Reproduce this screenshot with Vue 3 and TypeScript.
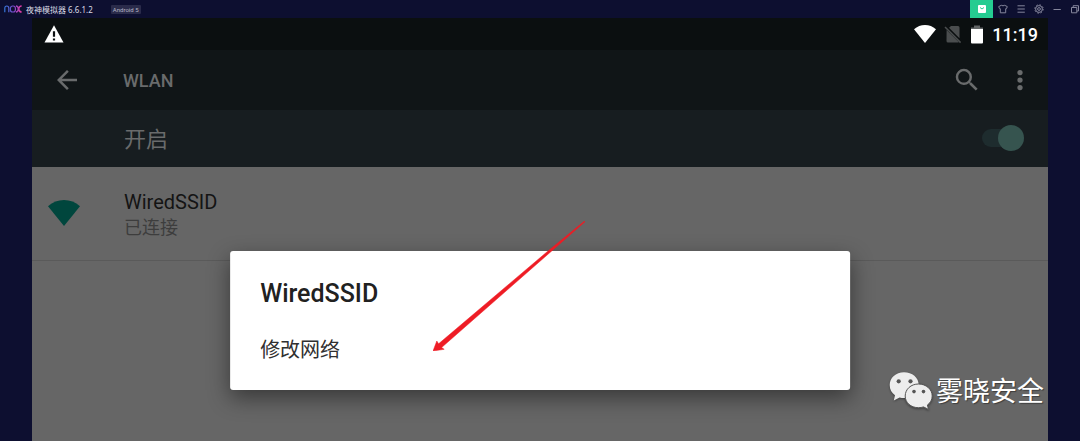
<script setup lang="ts">
import { ref } from 'vue'

const wifiOn = ref(true)
const networks = [{ ssid: 'WiredSSID', state: '已连接' }]
</script>

<template>
  <div class="emulator">
    <header class="titlebar">
      <svg class="nox" viewBox="0 0 18 8" role="img" aria-label="nox">
        <defs>
          <linearGradient id="nox-fill" x1="0" y1="0" x2="18" y2="0" gradientUnits="userSpaceOnUse">
            <stop offset="0" stop-color="#2f78d8" />
            <stop offset="0.55" stop-color="#7a48c8" />
            <stop offset="1" stop-color="#ee3aa0" />
          </linearGradient>
        </defs>
        <g fill="none" stroke="url(#nox-fill)" stroke-width="1.2">
          <path d="M.8 7.2V3.2Q.8 1 2.8 1T4.8 3.2V7.2" />
          <rect x="6.4" y="1" width="5" height="6" rx="2.3" />
          <path d="M12 1Q14 1 14.4 4Q14 7 12 7M17.6 1Q15.2 1 14.6 4Q15.2 7 17.6 7" stroke-width="1.5" />
        </g>
      </svg>
      <span class="app-name">夜神模拟器 6.6.1.2</span>
      <span class="badge">Android 5</span>
      <nav class="window-tools">
        <button class="tool store" aria-label="应用中心">
          <svg viewBox="0 0 10 10">
            <rect x="1" y="1" width="8" height="8" rx="1" fill="#fff" />
            <path d="M3 3.5Q5 6.5 7 3.5" fill="none" stroke="#25cc91" />
          </svg>
        </button>
        <button class="tool" aria-label="主题">
          <svg viewBox="0 0 10 10"><path d="M3.3 1.3Q5 2.3 6.7 1.3L9.3 2.6L8.5 4.7H7.7V8.8H2.3V4.7H1.5L.7 2.6Z" /></svg>
        </button>
        <button class="tool" aria-label="菜单">
          <svg viewBox="0 0 10 10"><path d="M1.5 1.8H8.8M1.5 5H8.8M1.5 8.2H8.8" /></svg>
        </button>
        <button class="tool" aria-label="设置">
          <svg viewBox="0 0 10 10">
            <circle cx="5" cy="5" r="3.4" />
            <circle cx="5" cy="5" r="1.4" />
            <circle cx="5" cy="5" r="4.2" stroke-dasharray="1.6 1.7" />
          </svg>
        </button>
        <button class="tool" aria-label="最小化">
          <svg viewBox="0 0 10 10"><path d="M1.5 5.5H8.8" /></svg>
        </button>
        <button class="tool" aria-label="最大化">
          <svg viewBox="0 0 10 10"><path d="M1.5 3.5H6.8V8.8H1.5ZM3.2 3.5V1.7H8.5V7H6.8" /></svg>
        </button>
      </nav>
    </header>

    <main class="screen">
      <div class="statusbar">
        <svg class="warning" viewBox="0 0 20 18" aria-hidden="true">
          <path d="M10 .3L19.5 17.5H.5Z" fill="#fff" />
          <path d="M10 6.2V11.8M10 13.4V15.4" stroke="#0b0f10" stroke-width="2.2" />
        </svg>
        <div class="indicators">
          <svg class="status-wifi" viewBox="0 0 32 26" aria-hidden="true">
            <path d="M16 26L0 6.2Q7 0 16 0T32 6.2Z" fill="#fff" />
          </svg>
          <svg class="sim" viewBox="0 0 18 19" aria-hidden="true">
            <path d="M7 1H14Q15.500 1 15.500 2.500V13.200L5 2.800ZM2.600 5L14.800 17Q14.500 17.500 13.500 17.500H4Q2.500 17.500 2.500 16Z" fill="#4a4d4e" />
            <path d="M1 2L16.600 17.600" stroke="#4a4d4e" stroke-width="1.500" />
          </svg>
          <svg class="battery" viewBox="0 0 14 19" aria-hidden="true">
            <path d="M1 4V2.500H4V.500H10V2.500H13V4Z" fill="#626566" />
            <path d="M1 4H13V17.500Q13 18.500 12 18.500H2Q1 18.500 1 17.500Z" fill="#fff" />
          </svg>
          <time class="clock">11:19</time>
        </div>
      </div>

      <div class="toolbar">
        <button class="icon-button" aria-label="返回">
          <svg viewBox="0 0 24 24"><path d="M20 11H7.83l5.59-5.59L12 4l-8 8 8 8 1.41-1.41L7.83 13H20v-2z" /></svg>
        </button>
        <h1>WLAN</h1>
        <div class="actions">
          <button class="icon-button" aria-label="搜索">
            <svg viewBox="0 0 24 24"><path d="M15.5 14h-.79l-.28-.27A6.47 6.47 0 0 0 16 9.5 6.5 6.5 0 1 0 9.5 16c1.61 0 3.09-.59 4.23-1.57l.27.28v.79l5 4.99L20.49 19l-4.99-5zm-6 0C7.01 14 5 11.99 5 9.5S7.01 5 9.5 5 14 7.01 14 9.5 11.99 14 9.5 14z" /></svg>
          </button>
          <button class="icon-button" aria-label="更多选项">
            <svg viewBox="0 0 24 24"><circle cx="12" cy="6" r="2.1" /><circle cx="12" cy="12" r="2.1" /><circle cx="12" cy="18" r="2.1" /></svg>
          </button>
        </div>
      </div>

      <div class="switchbar">
        <label for="wifi-switch">开启</label>
        <input id="wifi-switch" v-model="wifiOn" type="checkbox" role="switch" class="switch" />
      </div>

      <ul class="networks">
        <li v-for="network in networks" :key="network.ssid">
          <svg class="signal" viewBox="0 0 32 26" aria-hidden="true">
            <path d="M16 26L0 6.2Q7 0 16 0T32 6.2Z" />
          </svg>
          <div class="network-text">
            <p class="ssid">{{ network.ssid }}</p>
            <p class="state">{{ network.state }}</p>
          </div>
        </li>
      </ul>

      <section class="dialog" role="dialog" aria-labelledby="dialog-title">
        <h2 id="dialog-title">WiredSSID</h2>
        <button class="option">修改网络</button>
      </section>

      <svg class="pointer" viewBox="0 0 152 130" aria-hidden="true">
        <path d="M151.500 0L152 .8L8.600 126.500L11.200 128.300L0 130L3.800 120L5.600 122.800L115 30Z" fill="#ee1c25" stroke="#ee1c25" stroke-width=".5" />
      </svg>

      <div class="watermark">
        <svg viewBox="0 0 44 38" aria-hidden="true">
          <path d="M15 .3C6.800 .3 .7 6 .7 13C.7 17.500 2.700 21 6 23.300L4.800 28.500L10.600 25.500C12 25.900 13.500 26.100 15 26.100C23.200 26.100 29.700 20.500 29.700 13S23.200 .3 15 .3Z" />
          <path class="front" d="M29.500 12C22 12 16.200 17.200 16.200 24S22 35.700 29.500 35.700C31.300 35.700 33 35.400 34.500 34.900L39.500 37.400L38.400 33C41.300 31 43.200 27.800 43.200 24C43.200 17.200 37 12 29.500 12Z" />
          <g class="eyes">
            <circle cx="9.700" cy="9.300" r="2.100" /><circle cx="21.500" cy="9.300" r="2.100" />
            <circle cx="25" cy="19.600" r="1.800" /><circle cx="34.500" cy="19.600" r="1.800" />
          </g>
        </svg>
        <span>雾晓安全</span>
      </div>
    </main>
  </div>
</template>

<style>
body {
  margin: 0;
  background: #0d0f30;
}
</style>

<style scoped>
.emulator {
  display: flex;
  flex-direction: column;
  min-height: 100vh;
  overflow: hidden;
  background: #0d0f30;
  font-family: Roboto, "Noto Sans CJK SC", sans-serif;
}
button {
  padding: 0;
  border: 0;
  background: none;
  font: inherit;
}
svg {
  display: block;
}
h1, h2, p, ul {
  margin: 0;
  padding: 0;
}
.titlebar {
  display: flex;
  align-items: center;
  height: 18px;
  padding-left: 4px;
  font-family: "Noto Sans", "Noto Sans CJK SC", sans-serif;
}
.nox {
  width: 18px;
  height: 8px;
}
.app-name {
  margin-left: 4px;
  padding-top: 2px;
  color: #dcdce6;
  font-size: 8px;
  line-height: 16px;
}
.badge {
  margin-left: 18px;
  padding: 0 2px;
  border-radius: 1px;
  background: #2a2b4a;
  color: #b4b5c6;
  font-family: Roboto, sans-serif;
  font-size: 6px;
  line-height: 9px;
}
.window-tools {
  display: flex;
  align-items: center;
  margin-left: auto;
  margin-right: -4px;
}
.tool {
  display: grid;
  place-items: center;
  width: 18px;
  height: 18px;
}
.tool svg {
  width: 10px;
  height: 10px;
  fill: none;
  stroke: #85869c;
  stroke-width: 1;
}
.tool.store {
  width: 23px;
  margin-right: 1px;
  background: #25cc91;
}
.tool.store svg {
  stroke: none;
}
.screen {
  position: relative;
  display: flex;
  flex: 1;
  flex-direction: column;
  margin: 0 32px;
  background: #666;
}
.statusbar {
  display: flex;
  align-items: center;
  justify-content: space-between;
  height: 32px;
  padding: 0 10px 0 12px;
  background: #0b0f10;
}
.warning {
  width: 20px;
  height: 18px;
}
.indicators {
  display: flex;
  align-items: center;
  gap: 8px;
}
.status-wifi {
  width: 22px;
  height: 18px;
}
.sim {
  width: 18px;
  height: 19px;
}
.battery {
  width: 14px;
  height: 19px;
}
.clock {
  padding-top: 2px;
  color: #fff;
  font-size: 18px;
  font-weight: 500;
  line-height: 30px;
}
.toolbar {
  display: flex;
  align-items: center;
  height: 60px;
  padding: 0 13px 0 20px;
  background: #101517;
  color: #696b6c;
}
.icon-button {
  width: 30px;
  height: 30px;
}
.icon-button svg {
  width: 30px;
  height: 30px;
  fill: #696b6c;
}
.toolbar h1 {
  margin-left: 41px;
  padding-top: 2px;
  font-size: 18px;
  font-weight: 500;
  line-height: 24px;
}
.actions {
  display: flex;
  gap: 23px;
  margin-left: auto;
}
.switchbar {
  display: flex;
  align-items: center;
  justify-content: space-between;
  height: 57px;
  padding: 0 24px 0 92px;
  background: #171d20;
  color: #696b6c;
  font-size: 22px;
  line-height: 32px;
}
.switchbar label {
  padding-top: 2px;
}
.switch {
  position: relative;
  width: 42px;
  height: 26px;
  margin: 0 0 2px;
  appearance: none;
}
.switch::before {
  content: "";
  position: absolute;
  top: 4px;
  left: 0;
  width: 38px;
  height: 18px;
  border-radius: 9px;
  background: #1e2c2e;
}
.switch::after {
  content: "";
  position: absolute;
  top: 0;
  left: 0;
  width: 26px;
  height: 26px;
  border-radius: 50%;
  background: #666;
}
.switch:checked::after {
  left: 16px;
  background: #36544f;
}
.networks {
  list-style: none;
}
.networks li {
  display: flex;
  align-items: center;
  gap: 44px;
  height: 93px;
  padding: 0 16px;
  border-bottom: 1px solid #5a5a5a;
}
.signal {
  width: 32px;
  height: 26px;
  margin-bottom: 2px;
  fill: #00463d;
}
.network-text {
  padding-top: 2px;
}
.ssid {
  color: #141414;
  font-size: 20px;
  line-height: 26px;
}
.state {
  color: #3d3d3d;
  font-size: 18px;
  line-height: 26px;
}
.dialog {
  position: absolute;
  top: 233px;
  left: 50%;
  box-sizing: border-box;
  width: 61%;
  padding: 27px 30px 24px;
  transform: translateX(-50%);
  border-radius: 3px;
  background: #fff;
  box-shadow: 0 8px 22px rgba(0, 0, 0, 0.45);
  color: #212121;
}
.dialog h2 {
  font-size: 25px;
  font-weight: 500;
  line-height: 32px;
}
.option {
  display: block;
  width: 100%;
  margin-top: 24px;
  color: #303030;
  font-size: 20px;
  line-height: 32px;
  text-align: left;
}
.pointer {
  position: absolute;
  top: 203px;
  left: 401px;
  width: 152px;
  height: 130px;
}
.watermark {
  position: absolute;
  right: 4px;
  bottom: 28px;
  display: flex;
  align-items: flex-start;
  gap: 3px;
  color: #fff;
  font-size: 27px;
  line-height: 41px;
  text-shadow: 1px 1px 1px rgba(0, 0, 0, 0.4);
}
.watermark svg {
  width: 44px;
  height: 38px;
  fill: #ededed;
  filter: drop-shadow(0 1px 1px rgba(0, 0, 0, 0.4));
}
.front {
  stroke: #555;
  stroke-width: 1;
}
.eyes {
  fill: #555;
}
</style>
